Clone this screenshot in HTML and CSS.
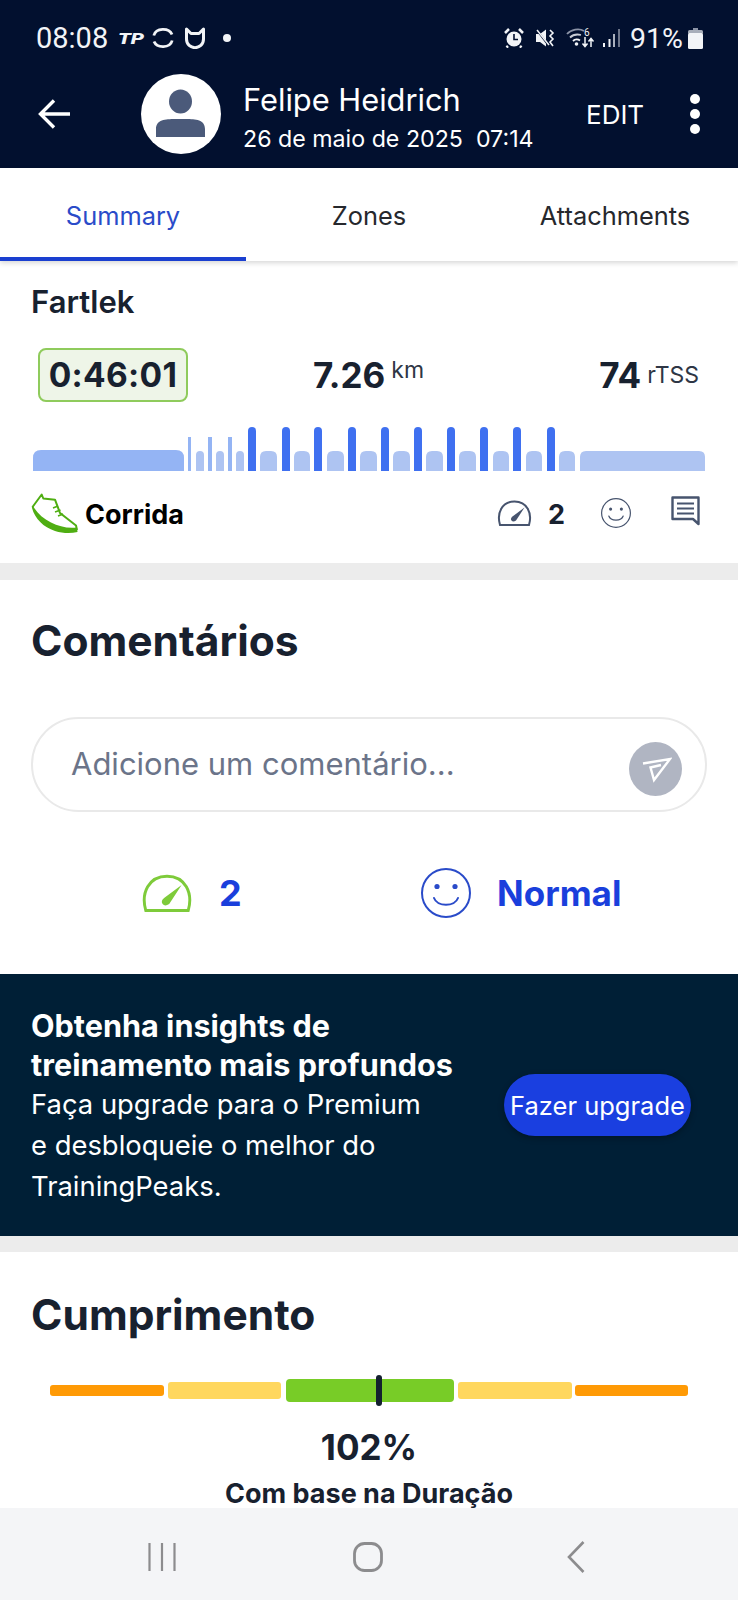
FILE: index.html
```html
<!DOCTYPE html>
<html lang="pt">
<head>
<meta charset="utf-8">
<title>Fartlek</title>
<link rel="stylesheet" href="styles.css">
</head>
<body>
<svg class="defs" width="0" height="0" aria-hidden="true">
  <symbol id="gauge" viewBox="0 0 35 26">
    <path d="M3 25C-.5 13 5 1.500 17.500 1.500S35.500 13 32 25Z" fill="none" stroke="currentColor" stroke-width="2"/>
    <path d="M27.500 7.500L19 20.500Q16 22.500 14.500 20.500T15.500 16.500Z" fill="currentColor"/>
  </symbol>
  <symbol id="smile" viewBox="0 0 50 50">
    <circle cx="25" cy="25" r="24" fill="none" stroke="currentColor" stroke-width="2"/>
    <circle cx="16" cy="18.500" r="2.600" fill="currentColor"/>
    <circle cx="34" cy="18.500" r="2.600" fill="currentColor"/>
    <path d="M13 30C16 39 34 39 37 30" fill="none" stroke="currentColor" stroke-width="2" stroke-linecap="round"/>
  </symbol>
</svg>

<header class="top">
  <div class="status">
    <span class="clock">08:08</span>
    <span class="tp-box"><span class="tp">TP</span></span>
    <svg class="st-icon ring" viewBox="0 0 22 22"><path d="M1.800 8.500C4 .5 17 .5 20 7.500M20.200 13.500C18 21.500 5 21.500 2 14.500" fill="none" stroke="#f2f4f7" stroke-width="2.800"/></svg>
    <svg class="st-icon mi" viewBox="0 0 20 22"><path d="M1.500 2V12C1.500 23.500 18.500 23.500 18.500 12V2L14 6.500H6Z" fill="none" stroke="#f2f4f7" stroke-width="3" stroke-linejoin="round"/><path d="M6 15C7.500 17.500 12.500 17.500 14 15" fill="none" stroke="#02102f" stroke-width="2"/></svg>
    <span class="notif-dot"></span>
    <span class="status-right">
      <svg class="st-icon alarm" viewBox="0 0 20 20"><circle cx="10" cy="11" r="7.500" fill="#f2f4f7"/><path d="M1 5L5 1M19 5L15 1M4 18L2.500 19.500M16 18L17.500 19.500" stroke="#f2f4f7" stroke-width="2.500"/><path d="M10 6V11.500H14" fill="none" stroke="#02102f" stroke-width="1.600"/></svg>
      <svg class="st-icon mute" viewBox="0 0 20 20"><path d="M1 6H5L11 1.500V18.500L5 14H1Z" fill="#f2f4f7"/><path d="M1 1L14 18" stroke="#02102f" stroke-width="2"/><path d="M2 2L14 17" stroke="#f2f4f7" stroke-width="1.500"/><path d="M15 2L18 5L15 8L18 11L15 14L18 18" fill="none" stroke="#f2f4f7" stroke-width="1.600"/></svg>
      <svg class="st-icon wifi" viewBox="0 0 29 20"><path d="M1 6C5 1.500 13 0 18 3" fill="none" stroke="#8b93a6" stroke-width="1.800"/><path d="M4 9.500C7 6.500 11 6 15 7" fill="none" stroke="#c9cdd6" stroke-width="1.800"/><path d="M7 13C9 11 12 11 14 12.500" fill="none" stroke="#f2f4f7" stroke-width="1.800"/><circle cx="10.500" cy="16" r="1.800" fill="#f2f4f7"/><path d="M19 9V18M16.500 15.500L19 18.500L21.500 15.500M25 19V11M22.500 13.500L25 10.500L27.500 13.500" fill="none" stroke="#f2f4f7" stroke-width="1.500"/><text x="18" y="7.500" class="wifi-six">6</text></svg>
      <svg class="st-icon signal" viewBox="0 0 18 20"><path d="M2 15V19M7.500 11V19" stroke="#f2f4f7" stroke-width="2"/><path d="M12 6V19" stroke="#aab0bd" stroke-width="2"/><path d="M17 1V19" stroke="#6d7589" stroke-width="2"/></svg>
      <span class="pct">91%</span>
      <svg class="st-icon battery" viewBox="0 0 15 21"><path d="M5 0H10V2H5Z" fill="#8b93a6"/><rect y="2" width="15" height="4" rx="1.500" fill="#a8aeba"/><rect y="5" width="15" height="16" rx="1.500" fill="#f2f4f7"/></svg>
    </span>
  </div>
  <div class="appbar">
    <svg class="back" viewBox="0 0 33 30"><path d="M32 15H3M16 1.500L2.500 15L16 28.500" fill="none" stroke="#fff" stroke-width="3.400"/></svg>
    <span class="avatar">
      <svg viewBox="0 0 80 80"><ellipse cx="39.500" cy="27.500" rx="11.500" ry="12" fill="#4b5a7a"/><path d="M15 63V55C15 44 28 45 39.500 45S64 44 64 55V63Z" fill="#4b5a7a"/></svg>
    </span>
    <div class="who">
      <div class="name">Felipe Heidrich</div>
      <div class="when">26 de maio de 2025&nbsp; 07:14</div>
    </div>
    <span class="edit">EDIT</span>
    <span class="dots"><i></i><i></i><i></i></span>
  </div>
</header>

<nav class="tabs">
  <a class="tab active">Summary</a>
  <a class="tab">Zones</a>
  <a class="tab">Attachments</a>
</nav>

<main class="scroll">
  <section class="card summary">
    <h2 class="workout">Fartlek</h2>
    <div class="metrics">
      <div class="metric-duration">0:46:01</div>
      <div class="metric metric-mid"><b>7.26</b><small class="raised">km</small></div>
      <div class="metric metric-end"><b>74</b><small>rTSS</small></div>
    </div>
    <svg class="structure" viewBox="0 0 738 44" width="738" height="44">
      <path class="warm" d="M33 44V31Q33 23 41 23H176Q184 23 184 31V44Z"/>
      <path class="warm" d="M188 44V10H191V44ZM208 44V10H212V44ZM228 44V10H232V44Z"/>
      <g class="rest">
        <path d="M196 44V28Q196 24 200 24T204 28V44ZM216 44V28Q216 24 220 24T224 28V44ZM236 44V28Q236 24 240 24T244 28V44Z"/>
        <path d="M260 44V30Q260 24 266 24H271Q277 24 277 30V44Z"/>
        <path d="M294 44V30Q294 24 300 24H304Q310 24 310 30V44Z"/>
        <path d="M327 44V30Q327 24 333 24H338Q344 24 344 30V44Z"/>
        <path d="M360 44V30Q360 24 366 24H371Q377 24 377 30V44Z"/>
        <path d="M393 44V30Q393 24 399 24H404Q410 24 410 30V44Z"/>
        <path d="M426 44V30Q426 24 432 24H437Q443 24 443 30V44Z"/>
        <path d="M459 44V30Q459 24 465 24H470Q476 24 476 30V44Z"/>
        <path d="M493 44V30Q493 24 499 24H503Q509 24 509 30V44Z"/>
        <path d="M526 44V30Q526 24 532 24H536Q542 24 542 30V44Z"/>
        <path d="M559 44V30Q559 24 565 24H569Q575 24 575 30V44Z"/>
        <path d="M580 44V30Q580 24 586 24H699Q705 24 705 30V44Z"/>
      </g>
      <g class="work">
        <path d="M248 44V4Q248 0 252 0T256 4V44Z"/>
        <path d="M282 44V4Q282 0 286 0T290 4V44Z"/>
        <path d="M314 44V4Q314 0 318 0T322 4V44Z"/>
        <path d="M348 44V4Q348 0 352 0T356 4V44Z"/>
        <path d="M381 44V4Q381 0 385 0T389 4V44Z"/>
        <path d="M414 44V4Q414 0 418 0T422 4V44Z"/>
        <path d="M447 44V4Q447 0 451 0T455 4V44Z"/>
        <path d="M480 44V4Q480 0 484 0T488 4V44Z"/>
        <path d="M513 44V4Q513 0 517 0T521 4V44Z"/>
        <path d="M547 44V4Q547 0 551 0T555 4V44Z"/>
      </g>
    </svg>
    <div class="activity">
      <svg class="shoe" viewBox="0 0 47 42">
        <path d="M1.500 14L10.700 1.500L12.300 5.500L24 6.700L29 20L45 32.500L46 37" fill="none" stroke="#4fae12" stroke-width="2" stroke-linejoin="round"/>
        <path d="M.7 13.500C3 25 12 34 24 38C32 40.500 40 40.500 46.500 39L46 34.500C36 35.500 28 33.500 20 29.500C12 25.500 6 20 2 13Z" fill="#4fae12"/>
        <path d="M22 15L27 13M24 19L29.500 17M27 23L32 21" stroke="#4fae12" stroke-width="1.600"/>
      </svg>
      <span class="sport">Corrida</span>
      <svg class="act-gauge"><use href="#gauge"/></svg>
      <span class="act-num">2</span>
      <svg class="act-smile"><use href="#smile"/></svg>
      <svg class="act-comment" viewBox="0 0 29 30">
        <path d="M1.500 1.500H27.500V28L22 23H1.500Z" fill="none" stroke="#47546e" stroke-width="2.400" stroke-linejoin="round"/>
        <path d="M6 7.500H23M6 12.500H23M6 17.500H23" stroke="#47546e" stroke-width="2.200"/>
      </svg>
    </div>
  </section>

  <section class="card comments">
    <h2 class="heading">Comentários</h2>
    <div class="comment-input">
      <span class="placeholder">Adicione um comentário...</span>
      <span class="send">
        <svg viewBox="0 0 32 32"><path d="M3 10.500L30 6L14 27L10.500 14.500L21 12" fill="none" stroke="#fff" stroke-width="2.400" stroke-linejoin="miter"/></svg>
      </span>
    </div>
    <div class="ratings">
      <div class="rating rating-effort">
        <svg class="big-gauge"><use href="#gauge"/></svg>
        <span class="rating-num">2</span>
      </div>
      <div class="rating rating-feel">
        <svg class="big-smile"><use href="#smile"/></svg>
        <span>Normal</span>
      </div>
    </div>
  </section>

  <section class="promo">
    <div class="promo-copy">
      <h3>Obtenha insights de<br>treinamento mais profundos</h3>
      <p>Faça upgrade para o Premium<br>e desbloqueie o melhor do<br>TrainingPeaks.</p>
    </div>
    <button class="upgrade">Fazer upgrade</button>
  </section>

  <section class="card compliance">
    <h2 class="heading">Cumprimento</h2>
    <div class="range">
      <span class="seg seg-orange seg-a"></span>
      <span class="seg seg-yellow seg-b"></span>
      <span class="seg seg-green"><i class="marker"></i></span>
      <span class="seg seg-yellow seg-c"></span>
      <span class="seg seg-orange seg-d"></span>
    </div>
    <div class="percent">102%</div>
    <div class="basis">Com base na Duração</div>
  </section>
</main>

<footer class="sysnav">
  <svg class="nav-recents" viewBox="0 0 28 30"><path d="M1.500 1V29M14 1V29M26.500 1V29" stroke="#8c8c8e" stroke-width="2.200"/></svg>
  <svg class="nav-home" viewBox="0 0 30 30"><rect x="1.500" y="1.500" width="27" height="27" rx="10" fill="none" stroke="#8c8c8e" stroke-width="2.800"/></svg>
  <svg class="nav-back" viewBox="0 0 18 32"><path d="M16.500 1L2 16L16.500 31" fill="none" stroke="#8c8c8e" stroke-width="2.600"/></svg>
</footer>
</body>
</html>
```
FILE: styles.css
```css
* { box-sizing: border-box; }
html, body { margin: 0; padding: 0; }
body {
  width: 738px;
  height: 1600px;
  overflow: hidden;
  display: flex;
  flex-direction: column;
  background: #fff;
  color: #18212f;
  font-family: Inter, "Liberation Sans", sans-serif;
}
.defs { position: absolute; }

/* Top bar */
.top { background: #02102f; color: #fff; height: 168px; flex: none; padding-top: 22px; }
.status {
  display: flex;
  align-items: center;
  height: 32px;
  padding: 0 35px 0 36px;
  color: #f2f4f7;
  font-family: Roboto, sans-serif;
}
.clock { font-size: 29px; width: 82px; }
.tp-box { width: 34px; }
.tp { display: inline-block; font: italic 900 15px/1 Roboto, sans-serif; transform: scaleX(1.4); transform-origin: left center; }
.st-icon { display: block; flex: none; }
.ring { width: 22px; height: 22px; margin-right: 11px; }
.mi { width: 20px; height: 22px; }
.notif-dot { width: 8px; height: 8px; border-radius: 50%; background: #f2f4f7; margin-left: 18px; }
.status-right { display: flex; align-items: center; margin-left: auto; }
.alarm { width: 20px; height: 20px; margin-right: 11px; }
.mute { width: 20px; height: 20px; margin-right: 11px; }
.wifi { width: 29px; height: 20px; margin-right: 7px; }
.wifi-six { font: 10px Roboto, sans-serif; fill: #f2f4f7; }
.signal { width: 18px; height: 20px; margin-right: 10px; }
.pct { font-size: 28.500px; margin-right: 5px; }
.battery { width: 15px; height: 21px; }

.appbar { display: flex; align-items: center; height: 80px; margin-top: 20px; padding-left: 38px; }
.back { width: 33px; height: 30px; flex: none; }
.avatar { width: 80px; height: 80px; border-radius: 50%; background: #fff; margin-left: 70px; flex: none; }
.avatar svg { display: block; width: 80px; height: 80px; }
.who { margin-left: 22px; width: 343px; padding-top: 7px; }
.name { font-size: 30.800px; line-height: 36px; }
.when { font-size: 23.200px; line-height: 30px; margin-top: 6px; }
.edit { font-size: 26px; }
.dots { display: flex; flex-direction: column; gap: 5px; margin-left: 46px; }
.dots i { width: 10px; height: 10px; border-radius: 50%; background: #fff; }

/* Tabs */
.tabs {
  flex: none;
  display: grid;
  grid-template-columns: repeat(3, 246px);
  height: 93px;
  background: #fff;
  position: relative;
  z-index: 1;
  box-shadow: 0 2px 5px rgba(0, 0, 0, 0.16);
}
.tab {
  display: flex;
  align-items: center;
  justify-content: center;
  padding-top: 6px;
  border-bottom: 4px solid transparent;
  font-size: 25.400px;
  color: #26282d;
}
.tab.active { color: #2a4bc9; border-bottom-color: #1a3fd0; }

/* Scrolling content */
.scroll { flex: 1; min-height: 0; overflow: hidden; background: #ececec; }
.card { background: #fff; }

.summary { padding-top: 23px; height: 302px; }
.workout { margin: 0 0 0 31px; font-size: 31px; line-height: 36px; font-weight: 600; }
.metrics {
  display: grid;
  grid-template-columns: 1fr auto 1fr;
  align-items: center;
  margin-top: 28px;
  padding: 0 39px 0 38px;
}
.metric-duration {
  justify-self: start;
  width: 150px;
  height: 54px;
  display: flex;
  align-items: center;
  justify-content: center;
  border: 2px solid #8fcb5c;
  border-radius: 8px;
  background: #eef5e8;
  font-size: 33.500px;
  font-weight: 700;
  letter-spacing: 0.3px;
}
.metric { display: flex; align-items: center; }
.metric b { font-size: 35px; font-weight: 700; }
.metric small { font-size: 23px; margin-left: 6px; color: #2e3645; font-weight: 400; }
.metric small.raised { margin-top: -10px; }
.metric-end { justify-self: end; }

.structure { display: block; margin-top: 25px; }
.warm { fill: #94b4f4; }
.rest { fill: #aec4f2; }
.work { fill: #3f70f0; }

.activity { display: flex; align-items: center; height: 42px; margin-top: 22px; padding-left: 31px; }
.shoe { width: 47px; height: 42px; flex: none; }
.sport { margin-left: 7px; font-size: 27px; font-weight: 700; color: #000; width: 412px; }
.act-gauge { width: 35px; height: 26px; color: #47546e; margin-top: -2px; flex: none; }
.act-num { width: 69px; padding-left: 16px; font-size: 27px; font-weight: 700; }
.act-smile { width: 30px; height: 30px; color: #47546e; margin-top: -2px; flex: none; }
.act-comment { width: 29px; height: 30px; margin: -6px 0 0 40px; flex: none; }

.comments { margin-top: 17px; height: 394px; padding-top: 36px; }
.heading { margin: 0 0 0 31px; font-size: 42.500px; line-height: 50px; font-weight: 700; }
.comment-input {
  display: flex;
  align-items: center;
  justify-content: space-between;
  width: 676px;
  height: 95px;
  margin: 51px 0 0 31px;
  padding: 0 23px 0 38px;
  border: 2px solid #e9e9e9;
  border-radius: 48px;
}
.placeholder { font-size: 31px; color: #6b7489; margin-top: -3px; }
.send {
  width: 53px;
  height: 54px;
  margin-top: 8px;
  border-radius: 50%;
  background: #b0b5c2;
  display: flex;
  align-items: center;
  justify-content: center;
}
.send svg { width: 32px; height: 32px; }

.ratings { display: flex; margin-top: 56px; padding-left: 141px; height: 50px; }
.rating { display: flex; align-items: center; color: #1a3fdc; font-size: 35px; font-weight: 700; }
.rating-effort { width: 279px; }
.big-gauge { width: 52px; height: 38px; color: #7ecb3a; flex: none; }
.rating-num { margin-left: 26px; font-size: 36px; }
.big-smile { width: 52px; height: 50px; flex: none; margin-right: 25px; color: #2a4bc9; }

.promo {
  height: 262px;
  display: flex;
  align-items: center;
  background: #001f36;
  color: #fff;
  padding-left: 31px;
}
.promo-copy { width: 473px; margin-top: 3px; }
.promo h3 { margin: 0; font-size: 30.600px; line-height: 39px; font-weight: 700; }
.promo p { margin: 0; font-size: 27.400px; line-height: 41px; }
.upgrade {
  width: 187px;
  height: 62px;
  border: 0;
  border-radius: 31px;
  padding: 0;
  background: #1a3fe0;
  color: #fff;
  font: 400 25.500px Inter, sans-serif;
  box-shadow: 0 2px 6px rgba(0, 0, 0, 0.3);
}

.compliance { margin-top: 16px; padding-top: 38px; height: 256px; }
.range { display: flex; align-items: center; height: 31px; margin-top: 35px; padding-left: 50px; }
.seg { display: block; border-radius: 3px; position: relative; flex: none; }
.seg-orange { height: 11px; background: #ff9a05; }
.seg-yellow { height: 17px; background: #ffd75e; }
.seg-green { width: 168px; height: 23px; background: #78cc27; border-radius: 4px; margin: 0 4px 0 5px; }
.seg-a { width: 114px; margin-right: 4px; }
.seg-b { width: 113px; }
.seg-c { width: 114px; margin-right: 3px; }
.seg-d { width: 113px; }
.marker {
  position: absolute;
  left: 90px;
  top: -4px;
  width: 6px;
  height: 31px;
  border-radius: 3px;
  background: #14202f;
}
.percent { margin-top: 20px; text-align: center; font-size: 35px; line-height: 42px; font-weight: 700; }
.basis { margin-top: 12px; text-align: center; font-size: 27px; line-height: 28px; font-weight: 700; }

/* System nav */
.sysnav { flex: none; height: 92px; background: #f4f5f7; display: flex; align-items: center; padding: 0 0 0 148px; }
.nav-recents { width: 28px; height: 30px; margin-top: 5px; }
.nav-home { width: 30px; height: 30px; margin: 5px 0 0 177px; }
.nav-back { width: 18px; height: 32px; margin: 5px 0 0 184px; }
```
